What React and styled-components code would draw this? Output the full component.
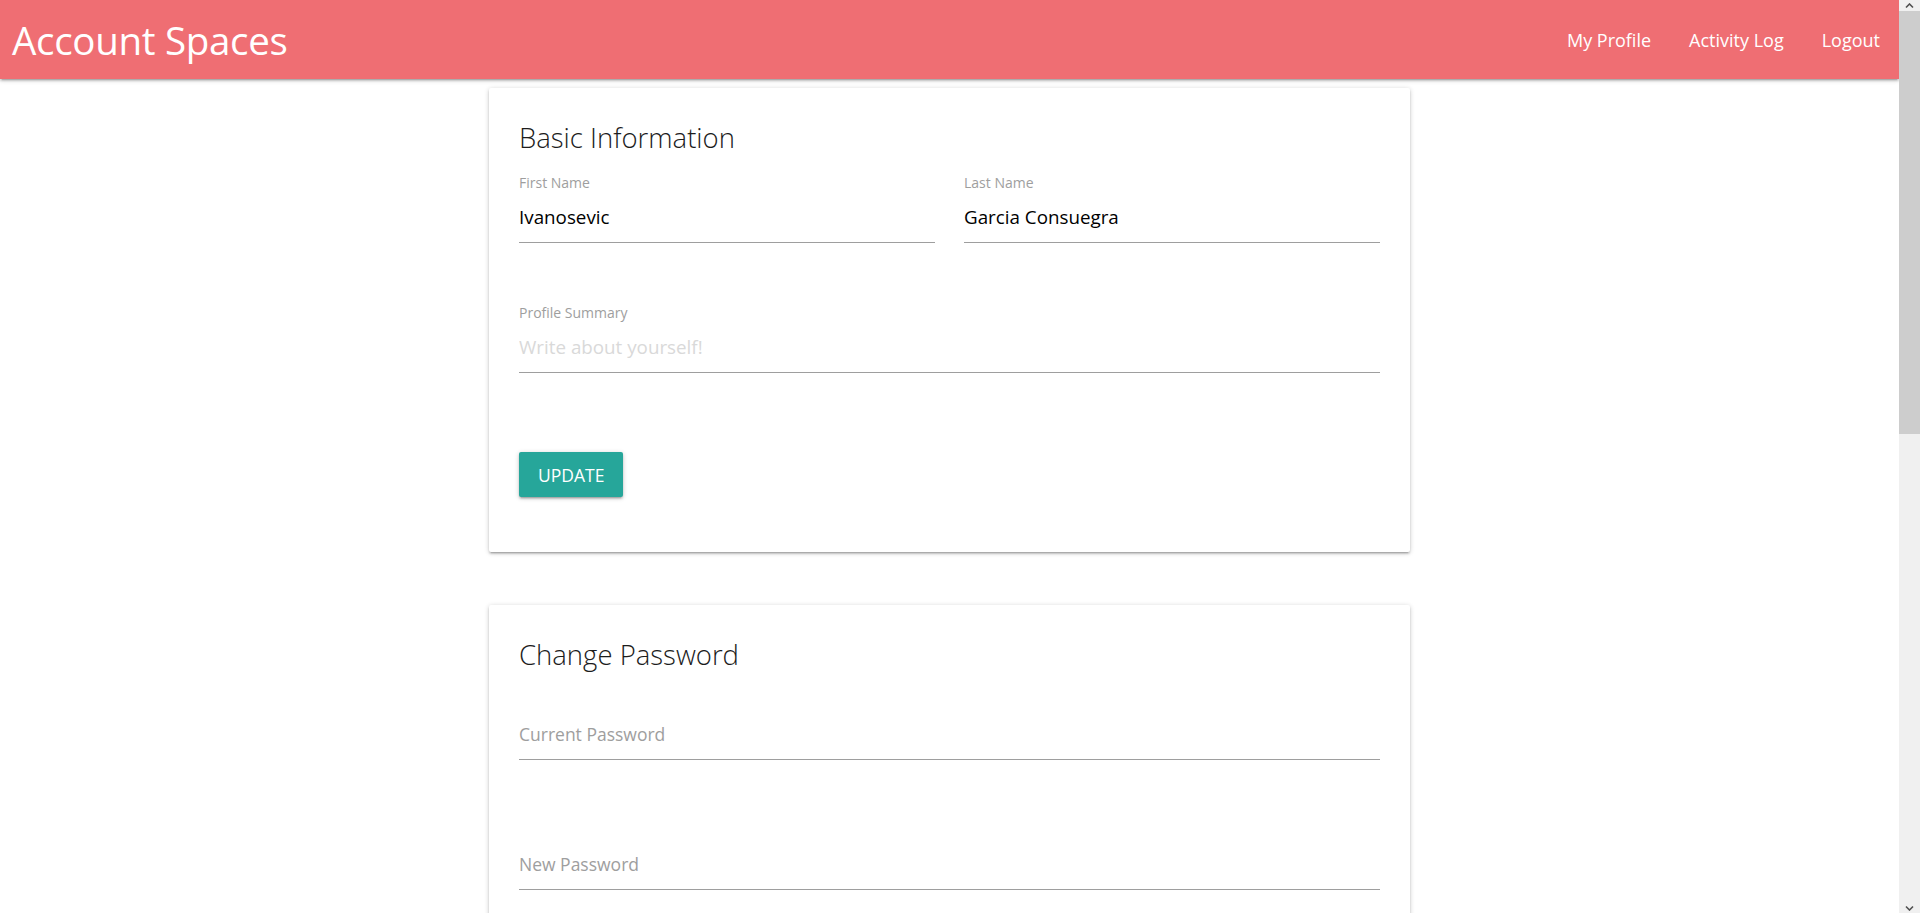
import React from 'react';
import styled, { createGlobalStyle } from 'styled-components';

const GlobalStyle = createGlobalStyle`
  html, body {
    margin: 0;
    padding: 0;
    background: #fff;
    font-family: "Open Sans", "Noto Sans", sans-serif;
    color: rgba(0, 0, 0, 0.87);
    overflow: hidden;
  }
  * { box-sizing: border-box; }
`;

const Window = styled.div`
  display: flex;
  height: 100vh;
`;

const Viewport = styled.div`
  flex: 1;
  min-width: 0;
  overflow: hidden;
`;

// classic desktop scrollbar, drawn since the page is photographed headless
const ScrollTrack = styled.aside`
  width: 21px;
  flex: none;
  background: #f0f0f0;
  display: flex;
  flex-direction: column;
  align-items: stretch;
`;

const ScrollArrow = styled.div`
  height: 11px;
  display: flex;
  align-items: center;
  justify-content: center;
  margin-top: ${p => (p.$bottom ? 'auto' : '0')};
`;

const ScrollThumb = styled.div`
  height: 423px;
  background: #cdcdcd;
`;

const Nav = styled.nav`
  height: 79px;
  background: #ef6e73;
  display: flex;
  align-items: center;
  justify-content: space-between;
  padding: 0 0 0 12px;
  box-shadow: 0 2px 2px 0 rgba(0,0,0,.14), 0 3px 1px -2px rgba(0,0,0,.12), 0 1px 5px 0 rgba(0,0,0,.2);
  position: relative;
  z-index: 2;
`;

const Brand = styled.a`
  color: #fff;
  font-size: 38.5px;
  font-weight: 400;
  text-decoration: none;
  letter-spacing: -0.3px;
`;

const NavLinks = styled.ul`
  display: flex;
  list-style: none;
  margin: 0;
  padding: 0;
`;

const NavLink = styled.li`
  color: #fff;
  font-size: 18px;
  padding: 0 19px;
  cursor: pointer;
`;

const Main = styled.main`
  padding: 9px 0 60px;
`;

const Card = styled.section`
  width: 921px;
  margin: 0 auto 53px;
  background: #fff;
  padding: 32px 30px 55px;
  box-shadow: 0 2px 2px 0 rgba(0,0,0,.14), 0 3px 1px -2px rgba(0,0,0,.12), 0 1px 5px 0 rgba(0,0,0,.2);
  border-radius: 2px;
`;

const CardTitle = styled.h2`
  margin: 0;
  font-size: 27.5px;
  line-height: 36px;
  font-weight: 300;
  color: #1c1c1c;
`;

const Row = styled.div`
  display: grid;
  grid-template-columns: ${p => p.$cols || '1fr'};
  column-gap: 29px;
`;

const FieldWrap = styled.div`
  margin-top: ${p => (p.$first ? '18px' : '61px')};
`;

const Label = styled.label`
  display: block;
  height: 18px;
  font-size: 14px;
  line-height: 18px;
  color: #9e9e9e;
`;

const Input = styled.input`
  display: block;
  width: 100%;
  height: 51px;
  padding: 0 0 1px;
  border: none;
  border-bottom: 1px solid #9e9e9e;
  outline: none;
  background: transparent;
  font-family: inherit;
  font-size: ${p => (p.$muted ? '17.5px' : '18.8px')};
  color: #000;

  &::placeholder {
    color: ${p => (p.$muted ? '#9e9e9e' : '#d9d9d9')};
  }
`;

const Button = styled.button`
  margin-top: 79px;
  height: 45px;
  padding: 0 19px;
  border: none;
  border-radius: 2px;
  background: #26a69a;
  color: #fff;
  font-family: inherit;
  font-size: 17.5px;
  text-transform: uppercase;
  box-shadow: 0 2px 2px 0 rgba(0,0,0,.14), 0 3px 1px -2px rgba(0,0,0,.12), 0 1px 5px 0 rgba(0,0,0,.2);
  cursor: pointer;
`;

function Field({ label, value, placeholder, muted, first, type = 'text' }) {
  return (
    <FieldWrap $first={first}>
      <Label>{label}</Label>
      <Input type={type} defaultValue={value} placeholder={placeholder} $muted={muted} />
    </FieldWrap>
  );
}

function Chevron({ down }) {
  return (
    <svg width="9" height="6" viewBox="0 0 9 6">
      <path
        d={down ? 'M1 1.5 L4.5 5 L8 1.5' : 'M1 4.5 L4.5 1 L8 4.5'}
        fill="none"
        stroke="#505050"
        strokeWidth="1.6"
      />
    </svg>
  );
}

export default function App() {
  return (
    <Window>
      <GlobalStyle />
      <Viewport>
        <Nav>
          <Brand href="#">Account Spaces</Brand>
          <NavLinks>
            <NavLink>My Profile</NavLink>
            <NavLink>Activity Log</NavLink>
            <NavLink>Logout</NavLink>
          </NavLinks>
        </Nav>
        <Main>
          <Card>
            <CardTitle>Basic Information</CardTitle>
            <Row $cols="1fr 1fr">
              <Field first label="First Name" value="Ivanosevic" />
              <Field first label="Last Name" value="Garcia Consuegra" />
            </Row>
            <Field label="Profile Summary" placeholder="Write about yourself!" />
            <Button>Update</Button>
          </Card>
          <Card>
            <CardTitle>Change Password</CardTitle>
            <Field first muted type="password" placeholder="Current Password" />
            <Field muted type="password" placeholder="New Password" />
            <Field muted type="password" placeholder="Confirm New Password" />
            <Button>Change Password</Button>
          </Card>
        </Main>
      </Viewport>
      <ScrollTrack>
        <ScrollArrow><Chevron /></ScrollArrow>
        <ScrollThumb />
        <ScrollArrow $bottom><Chevron down /></ScrollArrow>
      </ScrollTrack>
    </Window>
  );
}
